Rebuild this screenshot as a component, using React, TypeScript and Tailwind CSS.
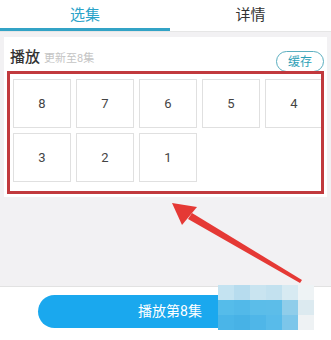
const EPISODES = [8, 7, 6, 5, 4, 3, 2, 1];

const FONT = { fontFamily: "Roboto, 'Noto Sans CJK SC', sans-serif" };

export default function App() {
  return (
    <div className="relative flex h-[340px] w-[331px] flex-col overflow-hidden bg-[#f2f1f3]" style={FONT}>
      {/* Tabs */}
      <div className="flex h-[31px] bg-white">
        <div className="flex w-[170px] items-center justify-center border-b-[3px] border-[#32a3c6] pt-[2px] text-[15px] text-[#2aa3c9]">
          选集
        </div>
        <div className="flex flex-1 items-center justify-center pb-[1px] text-[15px] text-[#333]">
          详情
        </div>
      </div>
      <div className="h-[1px] bg-[#e6e6e6]" />

      {/* Card */}
      <div className="mx-[4px] mt-[5px] bg-white pb-[3px]">
        <div className="flex h-[34px] items-end justify-between pl-[6px] pr-[3px]">
          <div className="flex items-baseline gap-[4px] pb-[3px]">
            <span className="text-[15px] font-medium text-[#333]">播放</span>
            <span className="text-[11px] text-[#c4c4c4]">更新至8集</span>
          </div>
          <div className="mb-[-1px] flex h-[21px] w-[48px] items-center justify-center rounded-full border border-[#5aaebf] text-[12px] text-[#2d9fb7]">
            缓存
          </div>
        </div>

        {/* Episode grid with red annotation box */}
        <div className="relative mx-[3px] h-[123px] overflow-hidden border-[3px] border-[#c1393d] pl-[3px] pt-[5px]">
          <div className="grid w-[310px] grid-cols-[repeat(5,58px)] gap-[5px]">
            {EPISODES.map((n) => (
              <div
                key={n}
                className="flex h-[49px] items-center justify-center border border-[#e0e0e0] text-[13px] text-[#444]"
              >
                {n}
              </div>
            ))}
          </div>
        </div>
      </div>

      <div className="flex-1" />

      {/* Bottom bar */}
      <div className="flex h-[54px] items-start border-t border-[#e2e2e2] bg-white pt-[8px]">
        <div className="ml-[38px] flex h-[33px] w-[264px] items-center justify-center rounded-full bg-[#1aa8ee] text-[14px] text-white">
          播放第8集
        </div>
      </div>

      {/* Mosaic blur over button end */}
      <div className="pointer-events-none absolute left-[218px] top-[285px] grid grid-cols-[repeat(6,16px)] grid-rows-[repeat(3,15px)]">
        <div className="bg-[#c4e3f1]" />
        <div className="bg-[#b7dcee]" />
        <div className="bg-[#c9e4f0]" />
        <div className="bg-[#c3e1ef]" />
        <div className="bg-[#d7eaf2]" />
        <div className="bg-[#eef3f5]" />
        <div className="bg-[#55bcea]" />
        <div className="bg-[#52b9e9]" />
        <div className="bg-[#5bbde9]" />
        <div className="bg-[#5cbde9]" />
        <div className="bg-[#8fcdea]" />
        <div className="bg-[#dceaf0]" />
        <div className="bg-[#4ab5e8]" />
        <div className="bg-[#47b2e6]" />
        <div className="bg-[#4fb6e8]" />
        <div className="bg-[#58bbea]" />
        <div className="bg-[#7cc6ea]" />
        <div className="bg-[#eef2f4]" />
      </div>

      {/* Red arrow annotation */}
      <svg className="pointer-events-none absolute left-0 top-0" width="331" height="340" viewBox="0 0 331 340">
        <polygon points="302,280 300,283 188,219 192,213" fill="#e53935" />
        <polygon points="172,203 197,207 182,225" fill="#e53935" />
      </svg>
    </div>
  );
}
